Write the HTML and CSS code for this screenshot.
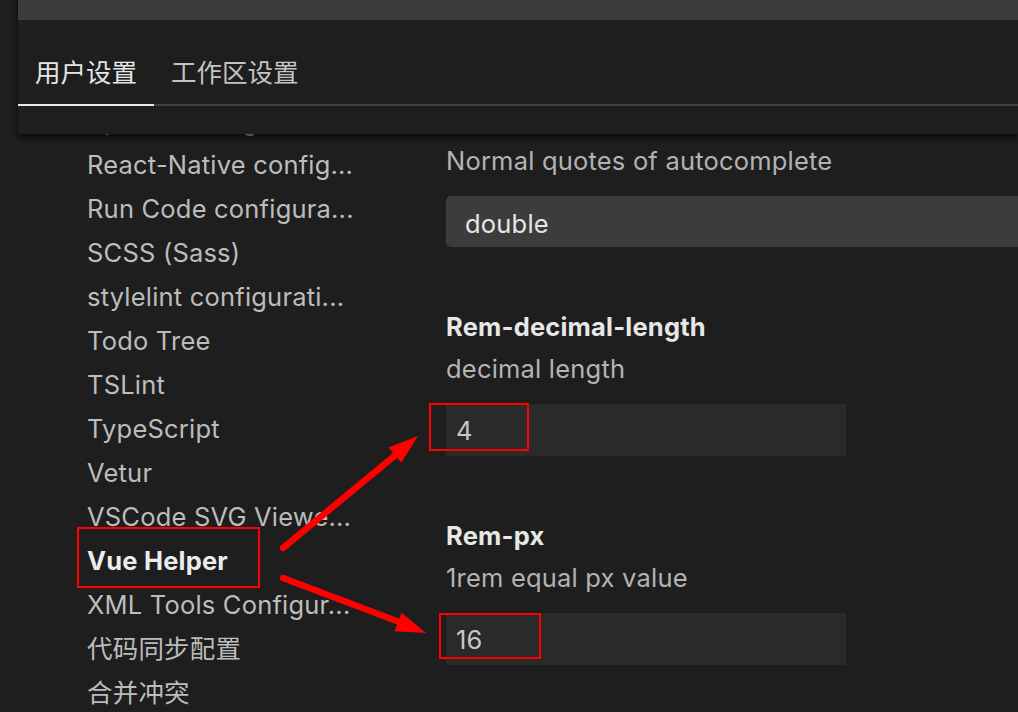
FILE: index.html
```html
<!DOCTYPE html>
<html lang="zh-CN">
<head>
<meta charset="utf-8">
<title>设置</title>
<link rel="stylesheet" href="styles.css">
</head>
<body>
<div class="page">
  <header class="header">
    <div class="search">搜索设置</div>
    <nav class="tabs">
      <div class="tab active">用户设置</div>
      <div class="tab">工作区设置</div>
    </nav>
    <div class="header-gap"></div>
  </header>
  <main class="main">
    <ul class="toc">
      <li>Python configurati...</li>
      <li>React-Native config...</li>
      <li>Run Code configura...</li>
      <li>SCSS (Sass)</li>
      <li>stylelint configurati...</li>
      <li>Todo Tree</li>
      <li>TSLint</li>
      <li>TypeScript</li>
      <li>Vetur</li>
      <li>VSCode SVG Viewe...</li>
      <li class="current">Vue Helper</li>
      <li>XML Tools Configur...</li>
      <li>代码同步配置</li>
      <li>合并冲突</li>
    </ul>
    <section class="settings">
      <div class="setting first">
        <div class="desc">Normal quotes of autocomplete</div>
        <div class="select">double</div>
      </div>
      <div class="setting">
        <div class="title">Rem-decimal-length</div>
        <div class="desc">decimal length</div>
        <div class="input">4</div>
      </div>
      <div class="setting">
        <div class="title">Rem-px</div>
        <div class="desc">1rem equal px value</div>
        <div class="input">16</div>
      </div>
    </section>
  </main>
  <svg class="annotations" width="1018" height="712" viewBox="0 0 1018 712" aria-hidden="true">
    <g fill="none" stroke="#ff0000" stroke-width="2">
      <rect x="78" y="528" width="181" height="59"/>
      <rect x="430" y="404" width="98" height="46"/>
      <rect x="440" y="614" width="100" height="44"/>
    </g>
    <g stroke="#ff0000" stroke-width="6.5" stroke-linecap="round">
      <line x1="283" y1="548" x2="398" y2="453"/>
      <line x1="283" y1="578" x2="402" y2="623"/>
    </g>
    <g fill="#ff0000">
      <polygon points="418,436 388.5,447.4 401.3,462.8"/>
      <polygon points="426,633 401.6,612.7 394.4,631.3"/>
    </g>
  </svg>
</div>
</body>
</html>
```

FILE: styles.css
```css
html, body {
  margin: 0;
  padding: 0;
}

body {
  background: #1f1f1f;
  width: 1018px;
  height: 712px;
  overflow: hidden;
  font-family: Inter, "Noto Sans CJK SC", sans-serif;
  font-size: 25.5px;
  letter-spacing: 0.2px;
  color: #bbbbbb;
}

.page {
  position: relative;
  width: 1018px;
  height: 712px;
  overflow: hidden;
}

.header {
  position: relative;
  z-index: 2;
  margin-left: 18px;
  background: #1e1e1e;
  box-shadow: 0 3px 6px rgba(0, 0, 0, 0.75);
}

.search {
  height: 60px;
  margin-top: -40px;
  line-height: 58px;
  padding-left: 13px;
  background: #3c3c3c;
  color: #8e8e8e;
  font-size: 25px;
  letter-spacing: 0;
}

.tabs {
  display: flex;
  border-bottom: 2px solid #3f3f3f;
}

.tab {
  padding: 38px 17px 16px;
  line-height: 30px;
  font-size: 25.5px;
  letter-spacing: 0;
  color: #c4c4c4;
  margin-bottom: -2px;
  border-bottom: 2px solid transparent;
}

.tab.active {
  color: #e6e6e6;
  border-bottom-color: #e8e8e8;
}

.header-gap {
  height: 28px;
}

.main {
  display: flex;
  position: relative;
  z-index: 1;
  background: #1e1e1e;
  margin-left: 18px;
  height: 578px;
  overflow: hidden;
}

.toc {
  list-style: none;
  margin: -35px 0 0;
  padding: 0 0 0 69px;
  width: 359px;
  flex: none;
}

.toc li {
  height: 44px;
  line-height: 44px;
  white-space: nowrap;
  overflow: hidden;
  color: #bcbcbc;
}

.toc li.current {
  font-weight: 700;
  color: #ececec;
}

.settings {
  flex: 1;
  padding-top: 11px;
  min-width: 0;
}

.setting {
  margin-top: 64px;
}

.setting.first {
  margin-top: 0;
}

.title {
  line-height: 32px;
  font-weight: 700;
  color: #e7e7e7;
  margin-bottom: 10px;
}

.desc {
  line-height: 32px;
  color: #b3b3b3;
  margin-bottom: 19px;
  white-space: nowrap;
}

.select {
  width: 700px;
  height: 51px;
  line-height: 47px;
  padding: 4px 0 0 19px;
  box-sizing: border-box;
  background: #3c3c3c;
  border-radius: 5px;
  color: #e6e6e6;
}

.input {
  width: 400px;
  height: 52px;
  line-height: 52px;
  padding: 1px 0 0 10px;
  box-sizing: border-box;
  background: #2a2a2a;
  color: #c8c8c8;
}

.annotations {
  position: absolute;
  left: 0;
  top: 0;
  z-index: 3;
  pointer-events: none;
}
```
